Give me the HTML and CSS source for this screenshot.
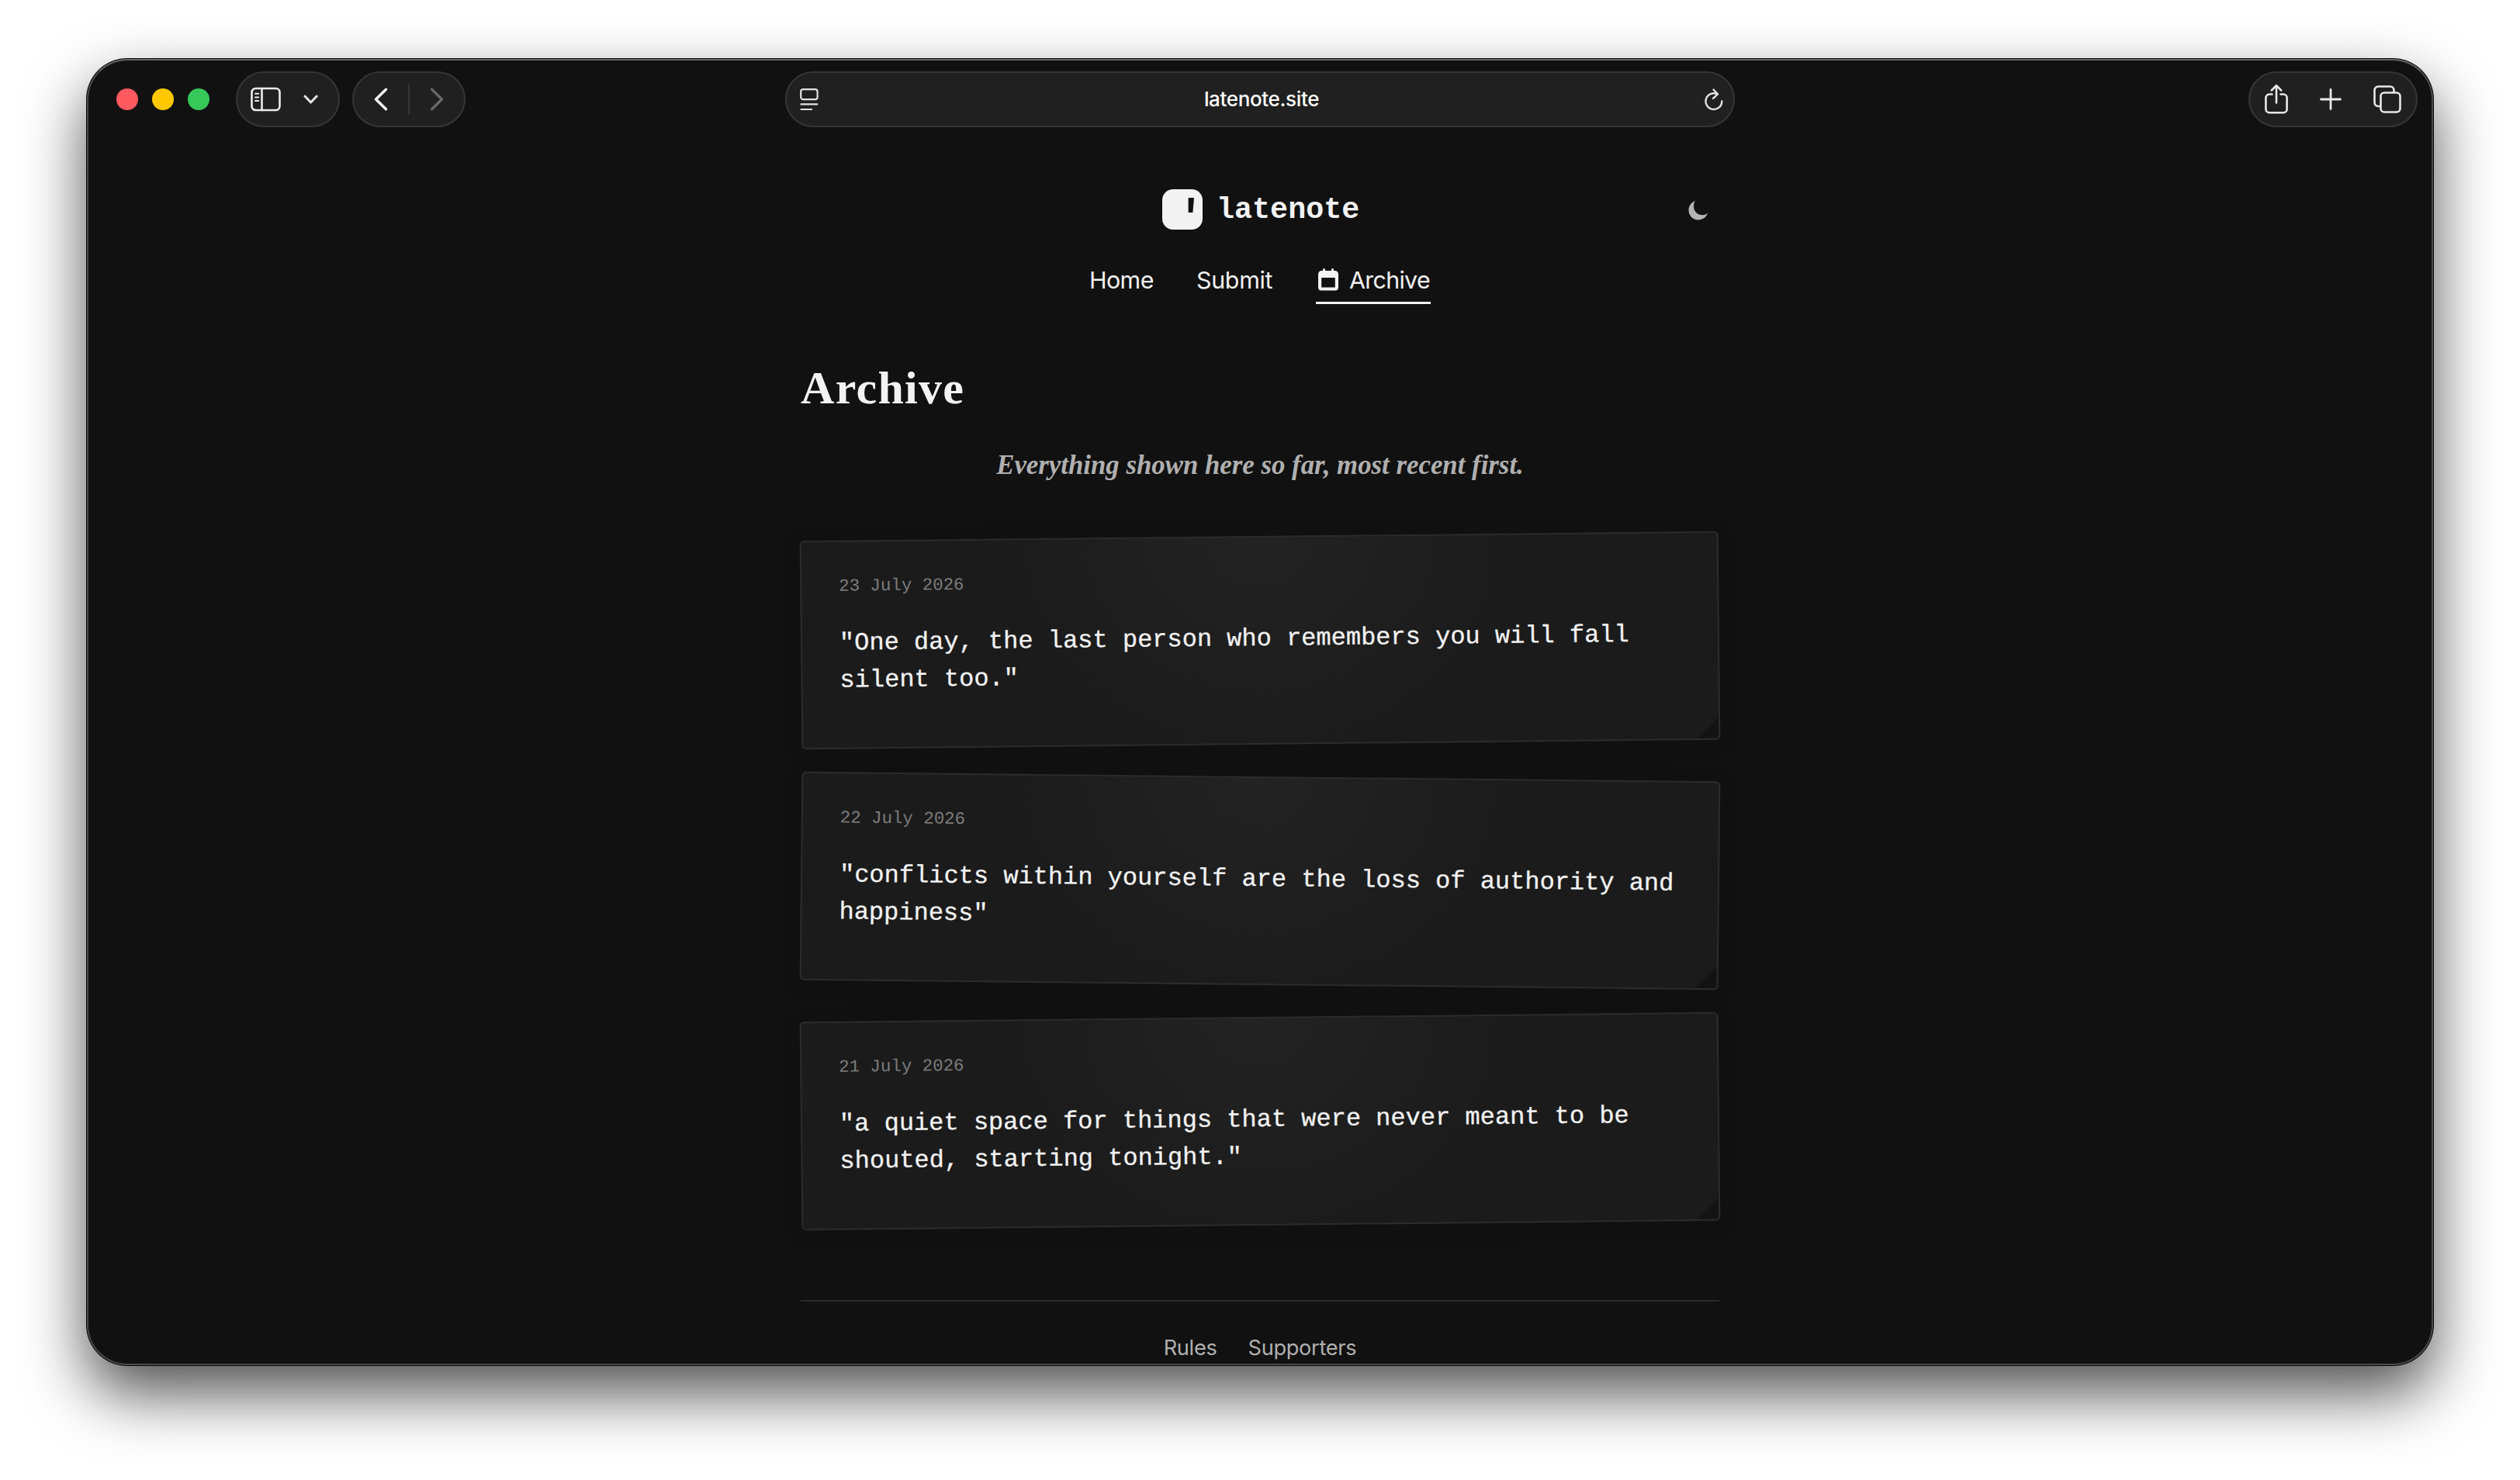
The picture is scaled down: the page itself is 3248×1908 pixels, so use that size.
FILE: index.html
```html
<!DOCTYPE html>
<html lang="en">
<head>
<meta charset="utf-8">
<title>latenote</title>
<link rel="stylesheet" href="styles.css">
</head>
<body>
<div class="window">
  <div class="toolbar">
    <div class="toolbar-left">
      <div class="lights"><span class="light red"></span><span class="light yellow"></span><span class="light green"></span></div>
      <div class="pill pill-sidebar">
        <svg width="40" height="32" viewBox="0 0 40 32" fill="none" stroke="#ececec" stroke-width="2.6" stroke-linecap="round"><rect x="1.5" y="2" width="36" height="28" rx="5"/><path d="M14.5 2v28"/><path stroke-width="2" d="M6 8.8h4.2M6 13.6h4.2M6 18h4.2"/></svg>
        <svg width="20" height="14" viewBox="0 0 20 14" fill="none" stroke="#e4e4e4" stroke-width="3" stroke-linecap="round" stroke-linejoin="round"><path d="M2 3l7.6 8L17.2 3"/></svg>
      </div>
      <div class="pill pill-nav">
        <svg width="18" height="30" viewBox="0 0 18 30" fill="none" stroke="#f2f2f2" stroke-width="3.4" stroke-linecap="round" stroke-linejoin="round"><path d="M15.5 2.2L2.5 15l13 12.8"/></svg>
        <span class="divider"></span>
        <svg width="18" height="30" viewBox="0 0 18 30" fill="none" stroke="#6a6a6a" stroke-width="3.2" stroke-linecap="round" stroke-linejoin="round"><path d="M2.5 2.2l13 12.8-13 12.8"/></svg>
      </div>
    </div>
    <div class="pill address">
      <svg width="24" height="30" viewBox="0 0 24 30" fill="none" stroke="#e2e2e2" stroke-width="2.2" stroke-linecap="round"><rect x="1.2" y="2.2" width="21.4" height="13" rx="3"/><path d="M1.5 21.4h20.8M1.5 28h13.6"/></svg>
      <span class="host">latenote.site</span>
      <svg width="24" height="30" viewBox="0 0 24 30" fill="none" stroke="#e2e2e2" stroke-width="2.4" stroke-linecap="round" stroke-linejoin="round"><path d="M22.3 17.5A10.4 10.4 0 1 1 16.5 8.3"/><path d="M11.4 2.500l5.600 5.800-6 5.600"/></svg>
    </div>
    <div class="toolbar-right">
      <div class="pill pill-actions">
        <svg width="30" height="40" viewBox="0 0 30 40" fill="none" stroke="#e8e8e8" stroke-width="2.6" stroke-linecap="round" stroke-linejoin="round"><path d="M9.500 13.500H6a4.600 4.600 0 0 0-4.600 4.600v14.600A4.600 4.600 0 0 0 6 37.300h18a4.600 4.600 0 0 0 4.600-4.600V18.100A4.600 4.600 0 0 0 24 13.500h-3.500"/><path d="M15 24.500V2.500M8.800 8.500L15 2.200l6.200 6.300"/></svg>
        <svg width="28" height="28" viewBox="0 0 28 28" fill="none" stroke="#e8e8e8" stroke-width="2.8" stroke-linecap="round"><path d="M14 1.500v25M1.500 14h25"/></svg>
        <svg width="36" height="36" viewBox="0 0 36 36" fill="none" stroke="#e8e8e8" stroke-width="2.6" stroke-linejoin="round"><rect x="9.500" y="9.500" width="25" height="25" rx="4.500"/><path d="M9.300 27H6.300a4.800 4.800 0 0 1-4.800-4.800V6.300a4.800 4.800 0 0 1 4.800-4.800h15.400a4.800 4.800 0 0 1 4.800 4.800v3"/></svg>
      </div>
    </div>
  </div>

  <main class="page">
    <header class="site-header">
      <div class="brand">
        <svg class="brand-mark" width="52" height="52" viewBox="0 0 52 52"><rect width="52" height="52" rx="14" fill="#f2f2f2"/><path d="M33.600 11h7.400l-1.600 19h-5.800z" fill="#111"/></svg>
        <span class="brand-name">latenote</span>
      </div>
      <svg class="moon" width="28" height="28" viewBox="0 0 28 28"><path d="M9.800 2C4.700 4 1.500 8.600 1.500 14c0 7 5.500 12.500 12.300 12.500 5.800 0 10.800-3.700 12.200-9-1.700 1.700-3.900 2.800-6.500 2.800C13 20.300 8 15.500 8 9c0-2.600.600-5 1.800-7z" fill="#b4b4b4"/></svg>
    </header>
    <nav class="nav">
      <a class="nav-link w-home">Home</a>
      <a class="nav-link w-submit">Submit</a>
      <a class="nav-link active">
        <svg width="28" height="30" viewBox="0 0 28 30"><path fill="#f2f2f2" fill-rule="evenodd" d="M7 1.500a1.500 1.500 0 0 1 3 0V3h8V1.500a1.500 1.500 0 0 1 3 0V3h1.500A4.500 4.500 0 0 1 27 7.500v17a4 4 0 0 1-4 4H5a4 4 0 0 1-4-4v-17A4.500 4.500 0 0 1 5.500 3H7zM5.200 12v12.500h17.600V12z"/></svg>
        <span>Archive</span>
      </a>
    </nav>
    <h1 class="title">Archive</h1>
    <p class="subtitle">Everything shown here so far, most recent first.</p>
    <section class="cards">
      <article class="card tilt-left"><time class="date">23 July 2026</time><p class="quote">"One day, the last person who remembers you will fall silent too."</p></article>
      <article class="card tilt-right"><time class="date">22 July 2026</time><p class="quote">"conflicts within yourself are the loss of authority and happiness"</p></article>
      <article class="card tilt-left"><time class="date">21 July 2026</time><p class="quote">"a quiet space for things that were never meant to be shouted, starting tonight."</p></article>
    </section>
    <footer class="footer"><a>Rules</a><a>Supporters</a></footer>
  </main>
</div>
</body>
</html>
```
FILE: styles.css
```css
* { box-sizing: border-box; }
html, body { margin: 0; height: 1908px; overflow: hidden; background: #fff; }
body { padding-top: 76px; font-family: Inter, "Liberation Sans", sans-serif; color: #f2f2f2; }
svg { display: block; flex: none; }

.window {
  width: 3024px;
  height: 1684px;
  margin: 0 auto;
  overflow: hidden;
  border-radius: 52px;
  background: #111;
  border: 2px solid #4a4a4a;
  border-top-color: #666;
  box-shadow: 0 0 0 1px #050505, 0 36px 80px rgba(0, 0, 0, .69);
}

.toolbar {
  display: grid;
  grid-template-columns: 862px 1224px 1fr;
  align-items: center;
  height: 100px;
  padding: 0 18px 0 36px;
}
.toolbar-left { display: flex; align-items: center; }
.toolbar-right { display: flex; justify-content: flex-end; }
.lights { display: flex; gap: 18px; margin-right: 34px; }
.light { width: 28px; height: 28px; border-radius: 50%; }
.red { background: #ff5a5f; }
.yellow { background: #fdc800; }
.green { background: #36c95a; }

.pill {
  display: flex;
  align-items: center;
  height: 72px;
  border: 2px solid #363636;
  border-radius: 36px;
  background: #202020;
}
.pill-sidebar { width: 134px; padding-left: 17px; gap: 28px; margin-right: 16px; }
.pill-nav { width: 146px; justify-content: space-between; padding: 0 26px 0 26px; }
.divider { width: 2px; height: 40px; background: #363636; }
.address { justify-content: space-between; padding: 0 13px 0 17px; }
.host { font-size: 26px; font-weight: 500; line-height: 32px; letter-spacing: -.35px; color: #fff; }
.pill-actions { width: 218px; justify-content: space-between; padding: 0 19px; }

.page { width: 1184px; margin: 0 auto; }
.site-header {
  display: grid;
  grid-template-columns: 1fr auto 1fr;
  align-items: center;
  height: 52px;
  margin-top: 66px;
}
.brand { grid-column: 2; display: flex; align-items: center; gap: 18px; width: 252px; }
.brand-name { padding-top: 3px; font: 700 38.4px/49px "Liberation Mono", monospace; }
.moon { justify-self: end; margin: 2px 13px 0 0; }

.nav { display: flex; justify-content: center; gap: 56px; margin-top: 40px; height: 56px; }
.nav-link {
  display: flex;
  height: 56px;
  padding-top: 5px;
  font-size: 30.4px;
  line-height: 40px;
  letter-spacing: -.6px;
  white-space: nowrap;
}
.w-home { width: 82px; }
.w-submit { width: 98px; letter-spacing: -.3px; }
.active { width: 148px; gap: 13px; padding-left: 2px; letter-spacing: -.7px; border-bottom: 3px solid #f2f2f2; }
.active svg { margin-top: 5px; }

.title { margin: 72px 0 0; font: 700 60px/72px "Liberation Serif", serif; letter-spacing: 1.3px; }
.subtitle {
  margin: 42px 0 0;
  text-align: center;
  font: italic 700 34.8px/44px "Liberation Serif", serif;
  white-space: nowrap;
  color: #b0b0b0;
}

.cards { display: grid; gap: 41px; margin-top: 68.5px; }
.card {
  position: relative;
  height: 269px;
  padding: 39px 48px 0;
  border: 2px solid #2c2c2c;
  border-radius: 6px;
  background:
    linear-gradient(135deg, transparent 50%, #131313 50%) right bottom / 28px 28px no-repeat,
    radial-gradient(ellipse 330px 290px at 50% 0, #232323, #1b1b1b) #1b1b1b;
  box-shadow: 0 4px 28px rgba(0, 0, 0, .1);
}
.tilt-left { transform: rotate(-.6deg); }
.tilt-right { transform: rotate(.6deg); }
.date { display: block; font: 22.4px/36px "Liberation Mono", monospace; color: #7c7c7c; }
.quote { margin: 32px 0 0; font: 32px/48px "Liberation Mono", monospace; -webkit-text-stroke: .3px currentColor; }

.footer {
  display: flex;
  justify-content: center;
  gap: 40px;
  margin-top: 96.5px;
  padding-top: 40px;
  border-top: 2px solid #2b2b2b;
  font-size: 27.2px;
  line-height: 40px;
  letter-spacing: -.3px;
  color: #b0b0b0;
}
```
